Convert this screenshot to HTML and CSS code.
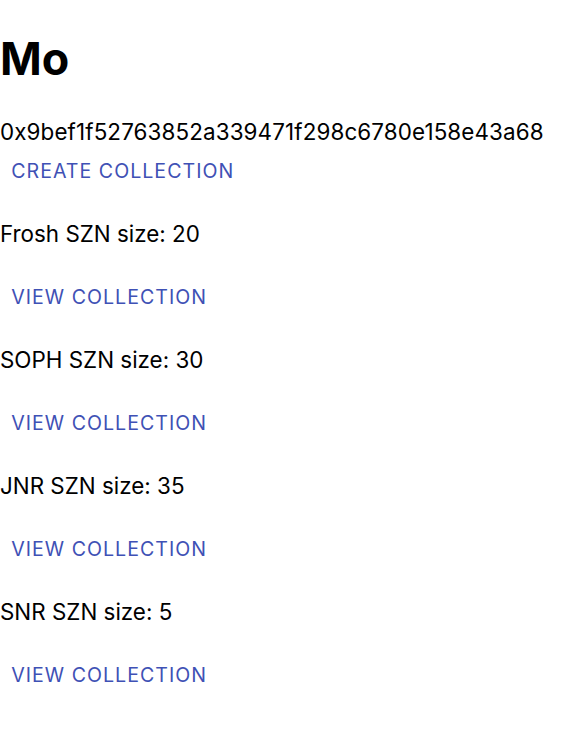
FILE: index.html
```html
<!DOCTYPE html>
<html lang="en">

<head>
    <meta charset="UTF-8">
    <meta name="viewport" content="width=device-width, initial-scale=1.0">
    <title>Mo - Collections</title>
    <link rel="stylesheet" href="styles.css">
</head>

<body>
    <div class="profile">
        <h1 class="profile-name">Mo</h1>
        <p class="wallet">0x9bef1f52763852a339471f298c6780e158e43a68</p>
        <button class="btn-text" type="button">Create Collection</button>

        <div class="seasons">
            <div class="season">
                <p>Frosh SZN size: 20</p>
                <button class="btn-text" type="button">View Collection</button>
            </div>
            <div class="season">
                <p>SOPH SZN size: 30</p>
                <button class="btn-text" type="button">View Collection</button>
            </div>
            <div class="season">
                <p>JNR SZN size: 35</p>
                <button class="btn-text" type="button">View Collection</button>
            </div>
            <div class="season">
                <p>SNR SZN size: 5</p>
                <button class="btn-text" type="button">View Collection</button>
            </div>
        </div>
    </div>
</body>

</html>
```

FILE: styles.css
```css
:root {
    --primary-color: #3f51b5;
    --text-color: #000;
    --base-size: 22.4px;
}

* {
    margin: 0;
    padding: 0;
    box-sizing: border-box;
}

body {
    font-family: Inter, 'Liberation Sans', Arial, sans-serif;
    font-size: var(--base-size);
    color: var(--text-color);
    background: #fff;
}

.profile {
    display: flex;
    flex-direction: column;
    align-items: flex-start;
}

.profile-name {
    font-size: 44.8px;
    font-weight: 700;
    line-height: 52px;
    margin-top: 32.7px;
    margin-bottom: 34.1px;
}

.wallet {
    line-height: 26.88px;
    letter-spacing: 0.12px;
}

.btn-text {
    background: none;
    border: none;
    color: var(--primary-color);
    font-family: inherit;
    font-size: 19.6px;
    font-weight: 400;
    line-height: 1.75;
    letter-spacing: 0.052em;
    text-transform: uppercase;
    padding: 8.4px 11.2px;
    border-radius: 5.6px;
    cursor: pointer;
}

.btn-text:hover {
    background-color: rgba(63, 81, 181, 0.04);
}

.seasons {
    display: flex;
    flex-direction: column;
    gap: 20.15px;
    margin-top: 20.65px;
}

.season {
    display: flex;
    flex-direction: column;
    align-items: flex-start;
    gap: 21.15px;
}

.season p {
    line-height: 33.6px;
}
```
